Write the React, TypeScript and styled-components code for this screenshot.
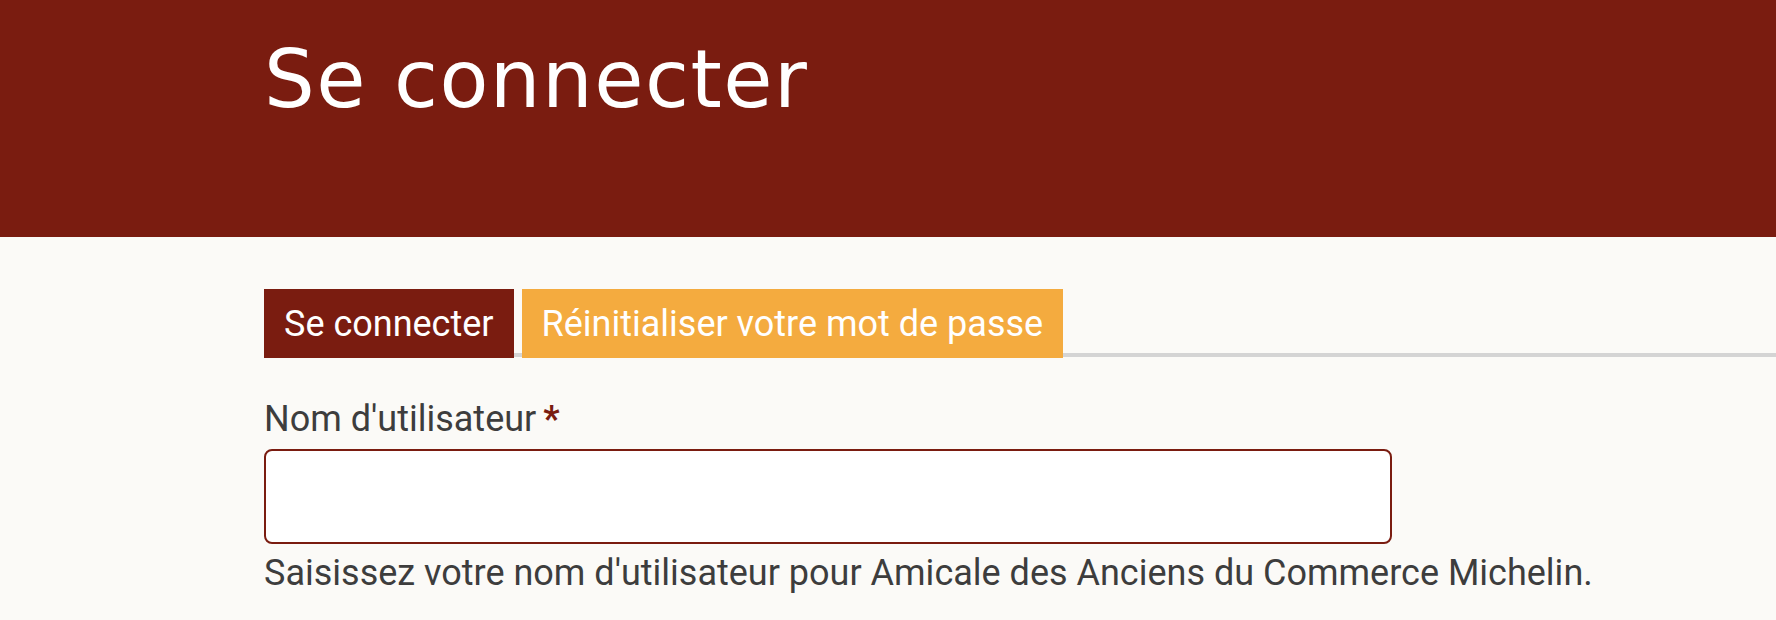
import React from 'react'
import styled, { createGlobalStyle } from 'styled-components'

const GlobalStyle = createGlobalStyle`
    body {
        margin: 0;
        background: #fbfaf7;
        font-family: Roboto, "Liberation Sans", sans-serif;
        color: #3d3d3d;
    }
`

const PageHeader = styled.header`
    box-sizing: border-box;
    height: 237px;
    padding: 40px 0 0 264px;
    background: #7a1c10;
`
const PageTitle = styled.h1`
    margin: 0;
    font-family: "DejaVu Sans", sans-serif;
    font-weight: 400;
    font-size: 80px;
    line-height: 1;
    letter-spacing: 1.5px;
    color: #fff;
`
const Main = styled.main`
    padding: 52px 0 0 264px;
`
const TabList = styled.nav`
    display: flex;
    gap: 8px;
    border-bottom: 4px solid #d4d4d4;
`
const Tab = styled.a<{ $active?: boolean }>`
    display: flex;
    align-items: center;
    height: 69px;
    margin-bottom: -5px;
    padding: 0 20px;
    font-size: 36px;
    color: #fff;
    text-decoration: none;
    background: ${(p) => (p.$active ? '#7a1c10' : '#f4ab3f')};
`
const Field = styled.div`
    display: flex;
    flex-direction: column;
    margin-top: 35px;
`
const Label = styled.label`
    font-size: 36px;
    line-height: 1.5;
`
const Required = styled.span`
    margin-left: 7px;
    color: #7a1c10;
    font-weight: 700;
`
const TextInput = styled.input`
    box-sizing: border-box;
    width: 1128px;
    height: 95px;
    margin-top: 3px;
    border: 2px solid #7a1c10;
    border-radius: 8px;
    background: #fff;
    outline: none;
`
const Help = styled.div`
    margin-top: 2px;
    font-size: 36px;
    line-height: 1.5;
`

export default function App() {
    return (
        <>
            <GlobalStyle />
            <PageHeader>
                <PageTitle>Se connecter</PageTitle>
            </PageHeader>
            <Main>
                <TabList>
                    <Tab $active href="#">Se connecter</Tab>
                    <Tab href="#">Réinitialiser votre mot de passe</Tab>
                </TabList>
                <Field>
                    <Label htmlFor="edit-name">
                        Nom d'utilisateur<Required>*</Required>
                    </Label>
                    <TextInput id="edit-name" type="text" />
                    <Help>Saisissez votre nom d'utilisateur pour Amicale des Anciens du Commerce Michelin.</Help>
                </Field>
            </Main>
        </>
    )
}
